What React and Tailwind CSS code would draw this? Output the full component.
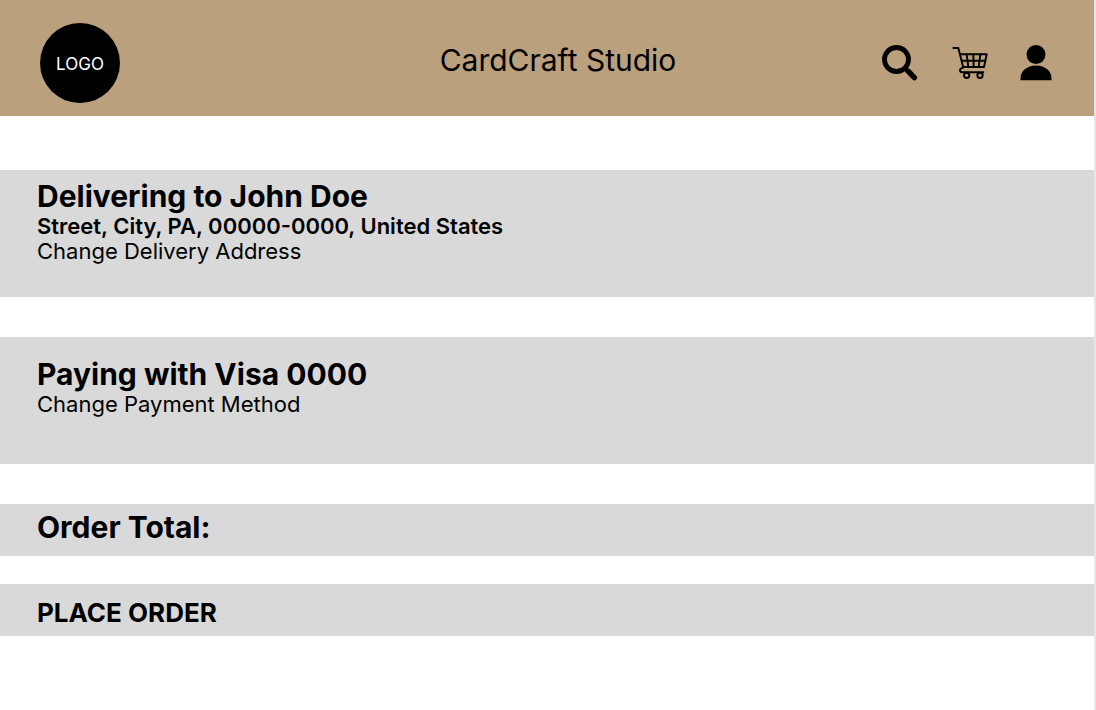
function SearchIcon() {
  return (
    <svg viewBox="0 0 36 36" className="size-9" fill="none" stroke="#000" aria-hidden="true">
      <circle cx="14.5" cy="14.5" r="12" strokeWidth="4.8" />
      <path d="M23 23.5l2.5 2.5" strokeWidth="4" />
      <path d="M26 26l6.4 6.6" strokeWidth="5.4" strokeLinecap="round" />
    </svg>
  );
}

function CartIcon() {
  return (
    <svg
      viewBox="0 0 108 99"
      className="h-[33px] w-9"
      fill="none"
      stroke="#000"
      strokeWidth="5.8"
      strokeLinecap="round"
      strokeLinejoin="round"
      aria-hidden="true"
    >
      <path d="M4 3H19L34 62C27 63 24 66 24 70C24 74 27 76 31 76H94" />
      <path d="M25 22H104L96 60H34" />
      <path d="M30 41H100" />
      <path d="M44 22L49 60M64 22L65 60M85 22L80 60" />
      <circle cx="44" cy="85" r="8" />
      <circle cx="84" cy="85" r="8" />
    </svg>
  );
}

function UserIcon() {
  return (
    <svg viewBox="0 0 32 36" className="h-9 w-8" fill="#000" aria-hidden="true">
      <circle cx="16" cy="9.5" r="9.5" />
      <path d="M.5 35.3V33.500C.5 26 7 20.500 16 20.500S31.500 26 31.500 33.500V35.300Z" />
    </svg>
  );
}

export default function App() {
  return (
    <div className="min-h-screen border-r-2 border-[#e5e5e5] bg-white font-['Inter',sans-serif] text-black">
      <header className="grid h-[116px] grid-cols-[1fr_auto_1fr] items-center bg-[#baa07d] pt-2.5 pr-[42px] pl-10">
        <a
          href="#home"
          className="flex size-20 items-center justify-center rounded-full bg-black pt-1 text-[17px] text-white"
        >
          LOGO
        </a>
        <h1 className="pb-1.5 pl-6 text-3xl font-normal">CardCraft Studio</h1>
        <nav className="flex items-center justify-end">
          <button type="button" aria-label="Search" className="mr-[34px]">
            <SearchIcon />
          </button>
          <button type="button" aria-label="Cart" className="mr-8">
            <CartIcon />
          </button>
          <button type="button" aria-label="Account">
            <UserIcon />
          </button>
        </nav>
      </header>

      <main className="pt-[54px]">
        <section className="min-h-[127px] bg-[#d9d9d9] px-[37px] pt-[9px]">
          <h2 className="text-3xl leading-[35px] font-bold">Delivering to John Doe</h2>
          <p className="text-[22px] leading-[25px] font-semibold">
            Street, City, PA, 00000-0000, United States
          </p>
          <a href="#address" className="block text-[22px] leading-[25px]">
            Change Delivery Address
          </a>
        </section>

        <section className="mt-10 min-h-[127px] bg-[#d9d9d9] px-[37px] pt-5">
          <h2 className="text-3xl leading-[35px] font-bold">Paying with Visa 0000</h2>
          <a href="#payment" className="block text-[22px] leading-[25px]">
            Change Payment Method
          </a>
        </section>

        <section className="mt-10 min-h-[52px] bg-[#d9d9d9] px-[37px] pt-1.5">
          <h2 className="text-3xl leading-[35px] font-bold">Order Total:</h2>
        </section>

        <button
          type="button"
          className="mt-7 flex h-[52px] w-full items-center bg-[#d9d9d9] px-[37px] pt-1 text-[26px] font-bold"
        >
          PLACE ORDER
        </button>
      </main>
    </div>
  );
}
